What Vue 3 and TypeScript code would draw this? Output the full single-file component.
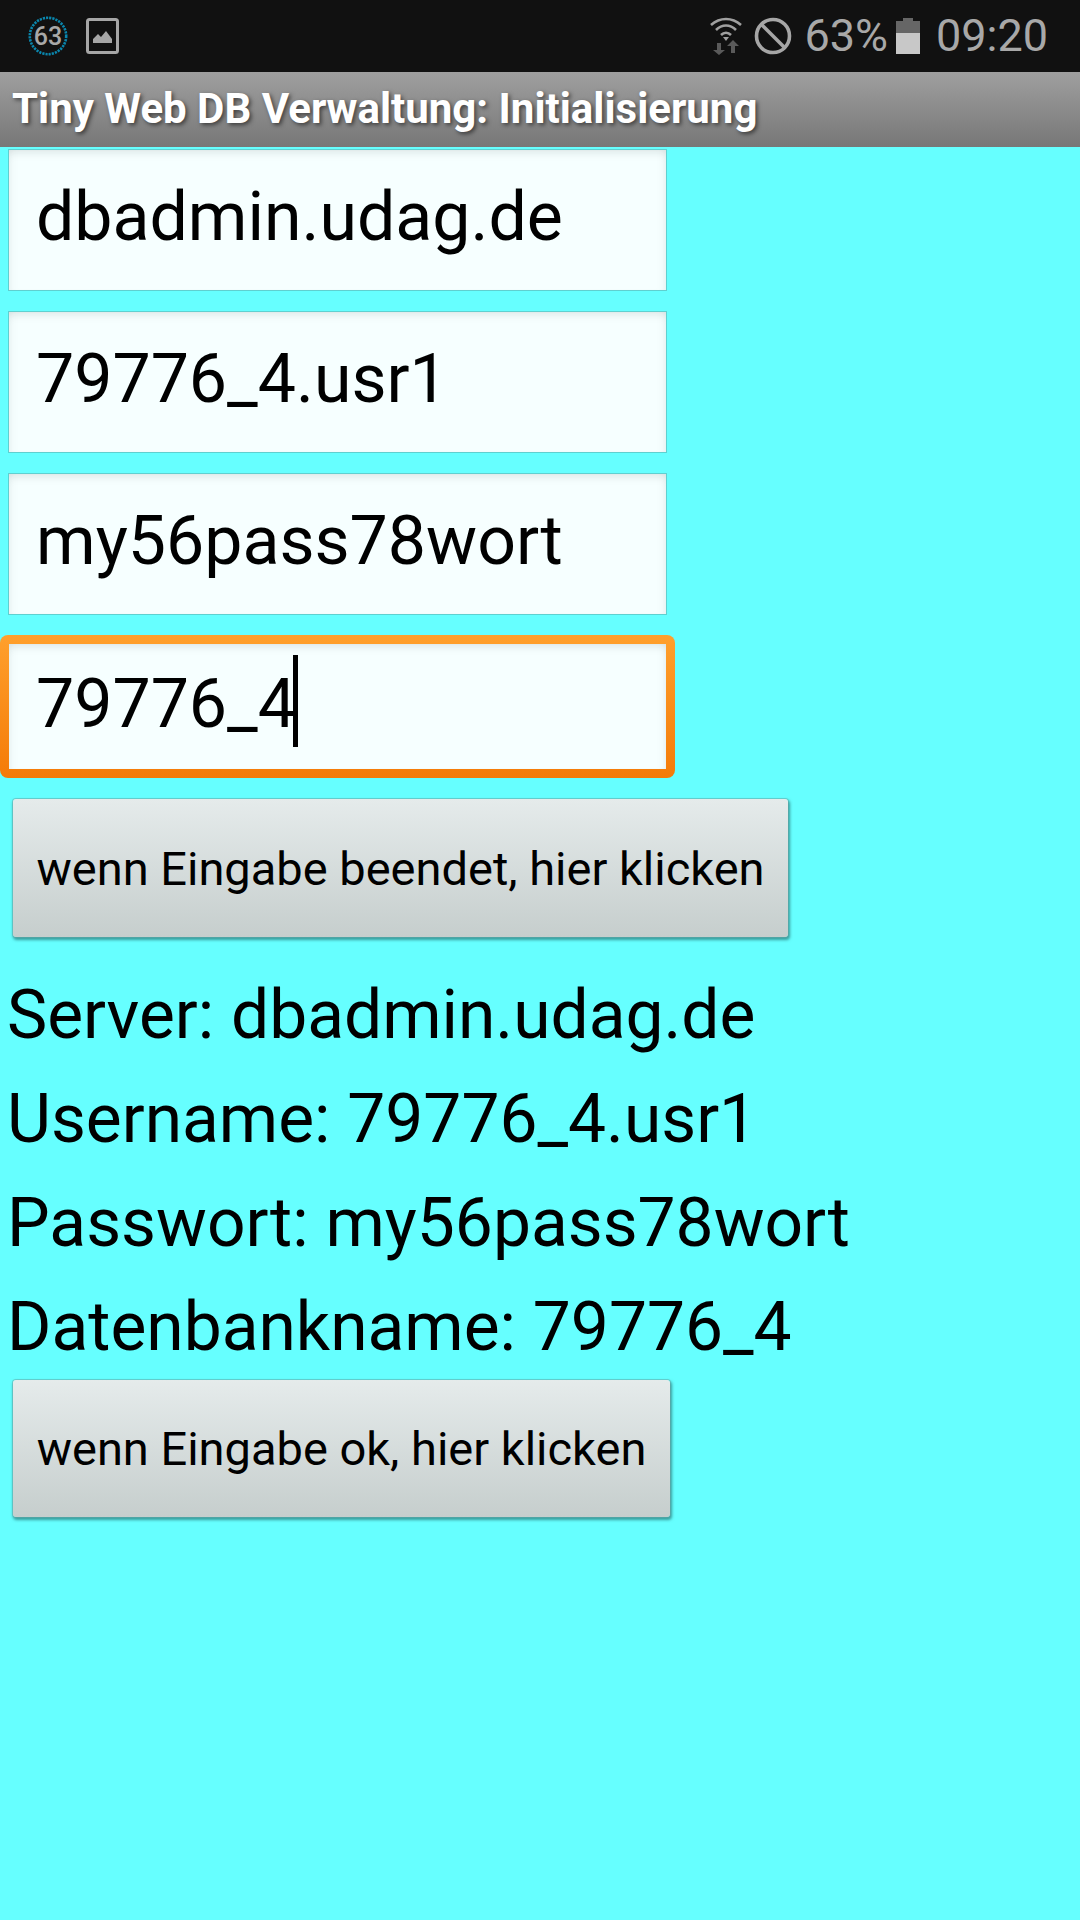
<script setup lang="ts">
const fields: string[] = ['dbadmin.udag.de', '79776_4.usr1', 'my56pass78wort']
const lines: string[] = [
  'Server: dbadmin.udag.de',
  'Username: 79776_4.usr1',
  'Passwort: my56pass78wort',
  'Datenbankname: 79776_4',
]
</script>

<template>
  <div class="screen">
    <header class="status">
      <div class="status-left">
        <svg class="ring" width="40" height="40" viewBox="0 0 40 40">
          <circle cx="20" cy="20" r="18.2" fill="none" stroke="#0a86ad" stroke-width="2.6" stroke-dasharray="2.2 1" />
          <text x="20" y="29" text-anchor="middle" class="ring-text">63</text>
        </svg>
        <svg class="pic" width="33" height="36" viewBox="0 0 33 36">
          <rect x="1.5" y="1.5" width="30" height="33" rx="2" fill="none" stroke="#a6a6a6" stroke-width="3" />
          <path d="M7 25 L7 21 L12 16 L15 19 L20 13 L26 21 L26 25 Z" fill="#a6a6a6" />
        </svg>
      </div>
      <div class="status-right">
        <svg class="wifi" width="34" height="38" viewBox="0 0 34 38">
          <path d="M2 8 C11 0 23 0 32 8" fill="none" stroke="#a0a0a0" stroke-width="2.6" />
          <path d="M7 13 C13 7 21 7 27 13" fill="none" stroke="#a0a0a0" stroke-width="2.6" />
          <path d="M12 18 C15 15 19 15 22 18" fill="none" stroke="#a0a0a0" stroke-width="2.6" />
          <path d="M14 20 L20 20 L17 24 Z" fill="#a0a0a0" />
          <path d="M8 26 L12 26 L12 33 L16 33 L10 38 L4 33 L8 33 Z" fill="#5a5a5a" />
          <path d="M22 36 L26 36 L26 29 L30 29 L24 23 L18 29 L22 29 Z" fill="#5a5a5a" />
        </svg>
        <svg class="block" width="38" height="38" viewBox="0 0 38 38">
          <circle cx="19" cy="19" r="16.5" fill="none" stroke="#a6a6a6" stroke-width="3.6" />
          <path d="M7.5 7.5 L30.5 30.5" stroke="#a6a6a6" stroke-width="3.6" />
        </svg>
        <span class="pct">63%</span>
        <svg class="batt" width="24" height="36" viewBox="0 0 24 36">
          <path d="M7 0 H17 V3 H24 V15 H0 V3 H7 Z" fill="#666" />
          <rect x="0" y="15" width="24" height="21" fill="#c8c8c8" />
        </svg>
        <span class="clock">09:20</span>
      </div>
    </header>

    <div class="titlebar">Tiny Web DB Verwaltung: Initialisierung</div>

    <main class="content">
      <div class="inputs">
        <div v-for="f in fields" :key="f" class="field">{{ f }}</div>
        <div class="focus-ring">
          <div class="field-inner">79776_4<span class="caret"></span></div>
        </div>
      </div>
      <button class="btn btn-long"><span class="btn-label">wenn Eingabe beendet, hier klicken</span></button>
      <div class="summary">
        <div v-for="l in lines" :key="l" class="line">{{ l }}</div>
      </div>
      <button class="btn btn-short"><span class="btn-label">wenn Eingabe ok, hier klicken</span></button>
    </main>
  </div>
</template>

<style scoped>
.screen {
  width: 1080px;
  height: 1920px;
  background: #66ffff;
  font-family: Roboto, "Liberation Sans", sans-serif;
  overflow: hidden;
}
.status {
  height: 72px;
  background: #111111;
  display: flex;
  align-items: center;
  justify-content: space-between;
  padding: 0 32px 0 28px;
  color: #a8a8a8;
}
.status-left {
  display: flex;
  align-items: center;
  gap: 18px;
}
.status-right {
  display: flex;
  align-items: center;
}
.ring-text {
  font-family: Roboto, sans-serif;
  font-size: 25px;
  font-weight: 500;
  fill: #a8a8a8;
}
.wifi {
  margin-right: 11px;
}
.block {
  margin-right: 12px;
}
.pct,
.clock {
  font-size: 45px;
  line-height: 72px;
  font-weight: 400;
}
.batt {
  margin: 0 16px 0 8px;
}
.titlebar {
  height: 75px;
  box-sizing: border-box;
  padding: 9px 0 0 12px;
  background: linear-gradient(#9f9f9f, #777777);
  color: #ffffff;
  font-size: 42px;
  font-weight: 700;
  line-height: 56px;
  text-shadow: 2px 2px 4px rgba(0, 0, 0, 0.55);
  white-space: nowrap;
}
.content {
  padding-top: 3px;
  display: flex;
  flex-direction: column;
  align-items: flex-start;
}
.inputs {
  display: flex;
  flex-direction: column;
  gap: 22px;
  margin-left: 9px;
}
.field,
.field-inner {
  position: relative;
  box-sizing: border-box;
  padding-left: 27px;
  background: #f6ffff;
  box-shadow:
    inset 0 8px 10px -6px rgba(120, 130, 130, 0.22),
    inset 8px 0 10px -8px rgba(120, 130, 130, 0.15),
    inset -8px 0 10px -8px rgba(120, 130, 130, 0.15);
  color: #000000;
  font-size: 68px;
  white-space: nowrap;
}
.field {
  width: 657px;
  height: 140px;
  line-height: 134px;
  outline: 1px solid rgba(90, 170, 170, 0.55);
}
.focus-ring {
  width: 675px;
  height: 143px;
  box-sizing: border-box;
  margin: -1px 0 0 -9px;
  padding: 9px;
  border-radius: 8px;
  background: linear-gradient(#ffa02c, #f47b08);
}
.field-inner {
  height: 100%;
  line-height: 120px;
}
.caret {
  position: absolute;
  left: 284px;
  top: 11px;
  width: 5px;
  height: 92px;
  background: #000000;
}
.btn {
  display: block;
  margin-left: 13px;
  padding: 0;
  border: none;
  border-radius: 3px;
  background: linear-gradient(#e5ebeb, #c6cecd);
  box-shadow:
    0 0 0 1px rgba(100, 170, 170, 0.5),
    1px 2px 3px 1px rgba(30, 90, 90, 0.6);
  color: #000000;
  font-family: inherit;
  font-size: 47px;
  text-align: center;
  white-space: nowrap;
}
.btn-long {
  width: 775px;
  height: 138px;
  margin-top: 21px;
}
.btn-short {
  width: 657px;
  height: 137px;
  margin-top: 1px;
}
.summary {
  margin-top: 26px;
  margin-left: 7px;
}
.line {
  height: 104px;
  line-height: 104px;
  font-size: 67.7px;
  color: #000000;
  white-space: nowrap;
}
</style>
